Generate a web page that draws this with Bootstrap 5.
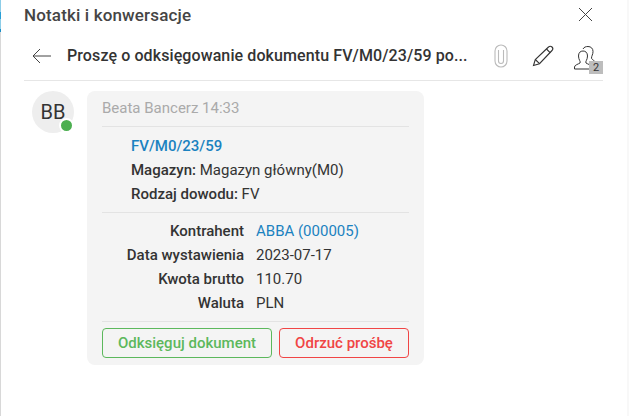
<!DOCTYPE html>
<html lang="en">

<head>
    <meta charset="UTF-8">
    <meta name="viewport" content="width=device-width, initial-scale=1.0">
    <link href="https://cdn.jsdelivr.net/npm/bootstrap@5.3.0/dist/css/bootstrap.min.css" rel="stylesheet">
    <script src="https://cdn.jsdelivr.net/npm/bootstrap@5.3.0/dist/js/bootstrap.bundle.min.js"></script>
    <title>Notatki i konwersacje</title>
    <style>
        html, body {
            height: 416px;
            overflow: hidden;
        }

        body {
            font-family: Roboto, sans-serif;
            font-size: 15px;
            color: #333;
            background: #fff;
        }

        .edge-left {
            width: 1px;
            background: linear-gradient(#8ccde8 0, #8ccde8 12px, #2a9fd6 12px, #2a9fd6 19px, #8ccde8 19px, #8ccde8 29px, #1b8fc8 29px, #1b8fc8 32px, #d8d8d8 32px);
        }

        .edge-right {
            width: 2px;
            background: #f8f8f8;
        }

        .panel-wrap {
            height: 416px;
            padding: 0 24px 0 23px;
        }

        .panel-head {
            height: 31px;
            padding-top: 3px;
        }

        .panel-title {
            font-size: 17px;
            font-weight: 500;
            letter-spacing: .15px;
            color: #454545;
            margin: 0;
        }

        .close-icon {
            margin: 4px 10px 0 0;
        }

        .thread-bar {
            height: 50px;
            border-bottom: 1px solid #e6e6e6;
            padding: 0 0 0 8px;
        }

        .thread-title {
            font-size: 16px;
            font-weight: 500;
            letter-spacing: .1px;
            color: #333;
            width: 427px;
            margin: 0 0 0 16px;
            white-space: nowrap;
        }

        .pencil-icon {
            margin-left: 24px;
        }

        .user-icon-box {
            width: 29px;
            height: 30px;
            margin-left: 20px;
            padding-top: 5px;
        }

        .user-count {
            right: 0;
            bottom: -3px;
            width: 14px;
            height: 13px;
            line-height: 13px;
            font-size: 11px;
            text-align: center;
            background: #bdbdbd;
            color: #333;
        }

        .avatar-box {
            width: 42px;
            height: 42px;
            background: #eee;
            font-size: 20px;
            color: #333;
            margin: 10px 13px 0 8px;
        }

        .online-dot {
            right: 0;
            bottom: 0;
            width: 15px;
            height: 15px;
            background: #4caf50;
            border: 2px solid #fff;
        }

        .msg-box {
            width: 337px;
            margin-top: 10px;
            padding: 5px 15px 7px;
            background: #f4f4f4;
            border-radius: 8px;
        }

        .msg-author {
            color: #aaa;
            line-height: 24px;
            padding-bottom: 6px;
            border-bottom: 1px solid #e3e3e3;
        }

        .doc-block {
            padding: 7px 0 6px 29px;
            line-height: 24px;
            border-bottom: 1px solid #e3e3e3;
        }

        .doc-link {
            color: #1b82c0;
            font-weight: 500;
        }

        .info-block {
            padding: 6px 0;
            line-height: 24px;
            border-bottom: 1px solid #e3e3e3;
        }

        .info-label {
            width: 142px;
            text-align: right;
            font-weight: 500;
            margin-right: 12px;
        }

        .info-link {
            color: #1b82c0;
        }

        .action-row {
            margin-top: 6px;
        }

        .btn-ok, .btn-no {
            height: 30px;
            padding: 0;
            font-size: 15px;
            font-weight: 500;
            background: transparent;
            border-radius: 4px;
        }

        .btn-ok {
            width: 170px;
            color: #5cb85c;
            border: 1px solid #5cb85c;
        }

        .btn-no {
            width: 130px;
            color: #f04545;
            border: 1px solid #f04545;
        }
    </style>
</head>

<body>
    <div class="d-flex">
        <div class="edge-left"></div>
        <div class="panel-wrap flex-grow-1">
            <!-- Header -->
            <div class="panel-head d-flex justify-content-between align-items-start">
                <p class="panel-title">Notatki i konwersacje</p>
                <svg class="close-icon" width="15" height="15" viewBox="0 0 15 15" fill="none" stroke="#444" stroke-width="1">
                    <path d="M1 1l13 13M14 1L1 14"/>
                </svg>
            </div>

            <!-- Thread bar -->
            <div class="thread-bar d-flex align-items-center">
                <svg width="19" height="16" viewBox="0 0 19 16" fill="none" stroke="#444" stroke-width="1">
                    <path d="M19 8H1M8 1L1 8l7 7"/>
                </svg>
                <p class="thread-title">Proszę o odksięgowanie dokumentu FV/M0/23/59 po...</p>
                <svg width="14" height="24" viewBox="0 0 14 24" fill="none" stroke="#bbb" stroke-width="1.1">
                    <path d="M1 7a6 6 0 0 1 12 0v10a6 6 0 0 1-12 0z"/>
                    <path d="M4.500 6v11a2.500 2.500 0 0 0 5 0V6"/>
                </svg>
                <svg class="pencil-icon" width="22" height="22" viewBox="0 0 22 22" fill="none" stroke="#333" stroke-width="1.1">
                    <path d="M1.500 20.500l1.800-6L16.500 2c1-1 2.500-1 3.500 0s1 2.500 0 3.500L7.500 18.700z"/>
                    <path d="M3.300 14.500l4.200 4.200M14.500 4l3.800 3.800"/>
                </svg>
                <div class="user-icon-box position-relative">
                    <svg width="24" height="24" viewBox="0 0 24 24" fill="none" stroke="#333" stroke-width="1">
                        <path d="M.5 23v-2c0-2 4-3 5.500-4 1-1.500-1.500-3-1.500-7 0-3.500 2-5 4.500-5s4.500 1.500 4.500 5c0 4-2.500 5.500-1.500 7 1.500 1 5.500 2 5.500 4v2z"/>
                        <path d="M9 3c1-2 3-2.500 5-2.500 3 0 5 2 5 5 0 3-1.500 4.500-1.500 6.500 0 1 1.500 2 3 3"/>
                    </svg>
                    <span class="user-count position-absolute">2</span>
                </div>
            </div>

            <!-- Message -->
            <div class="d-flex align-items-start">
                <div class="avatar-box rounded-circle position-relative d-flex align-items-center justify-content-center">
                    BB
                    <span class="online-dot rounded-circle position-absolute"></span>
                </div>
                <div class="msg-box">
                    <div class="msg-author">Beata Bancerz 14:33</div>
                    <div class="doc-block">
                        <div class="doc-link">FV/M0/23/59</div>
                        <div><span class="fw-medium">Magazyn:</span> Magazyn główny(M0)</div>
                        <div><span class="fw-medium">Rodzaj dowodu:</span> FV</div>
                    </div>
                    <div class="info-block">
                        <div class="d-flex"><span class="info-label">Kontrahent</span><span class="info-link">ABBA (000005)</span></div>
                        <div class="d-flex"><span class="info-label">Data wystawienia</span><span>2023-07-17</span></div>
                        <div class="d-flex"><span class="info-label">Kwota brutto</span><span>110.70</span></div>
                        <div class="d-flex"><span class="info-label">Waluta</span><span>PLN</span></div>
                    </div>
                    <div class="action-row d-flex justify-content-between">
                        <button class="btn btn-ok" type="button">Odksięguj dokument</button>
                        <button class="btn btn-no" type="button">Odrzuć prośbę</button>
                    </div>
                </div>
            </div>
        </div>
        <div class="edge-right"></div>
    </div>
</body>

</html>
